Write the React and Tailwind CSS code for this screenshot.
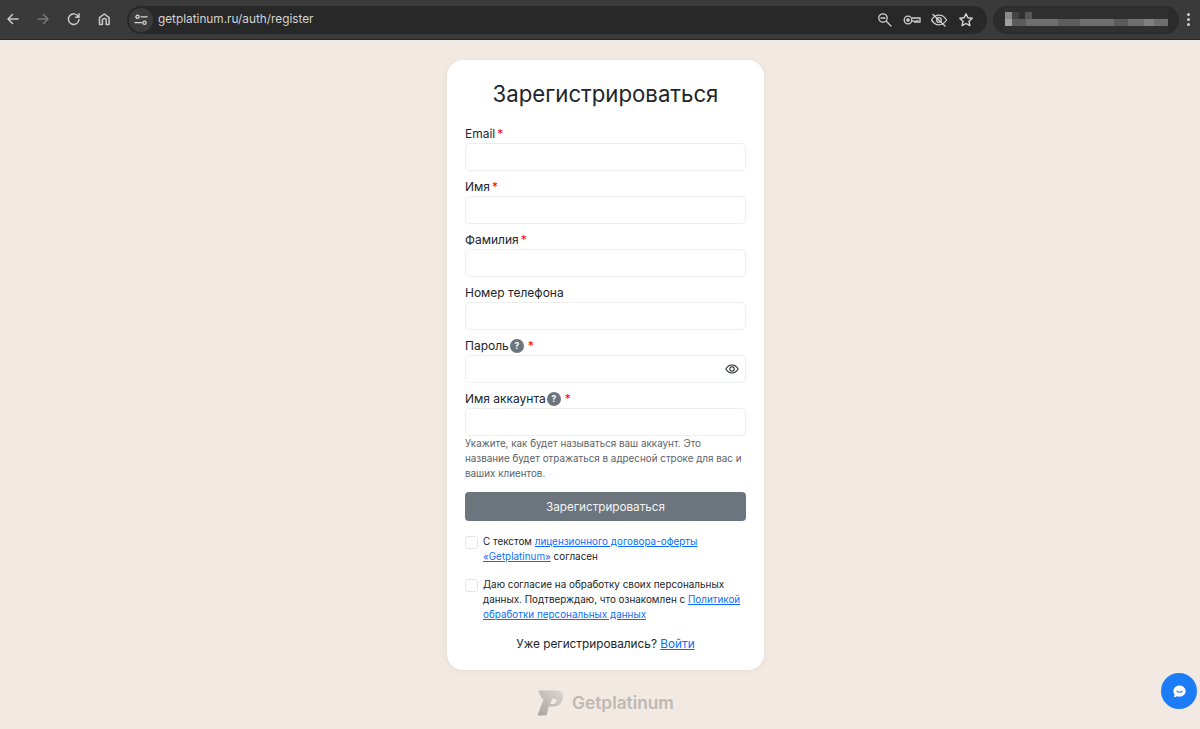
import React from "react";

function Chrome() {
  return (
    <div className="h-[40px] shrink-0 bg-[#3a3a3a] border-b border-[#262626] flex items-center text-[#c9c9c9] font-['Inter',sans-serif]">
      <div className="w-[127px] shrink-0 flex items-center">
        <svg width="127" height="39" viewBox="0 0 127 39" fill="none" stroke="currentColor" strokeWidth="1.5" strokeLinecap="round" strokeLinejoin="round">
          <path d="M18 19H8.500M12.500 14.500 8 19l4.500 4.500" />
          <path d="M38 19h9.500M43.500 14.500 48 19l-4.500 4.500" stroke="#777" />
          <path d="M78.300 16.500a5.300 5.300 0 1 0 .7 3M79 13.800v3.400h-3.400" />
          <path d="M99.500 24.500v-6.800l4.800-3.700 4.800 3.700v6.800h-2.900v-4.200a1.900 1.900 0 0 0-3.800 0v4.200z" />
        </svg>
      </div>
      <div className="w-[860px] h-[28px] rounded-full bg-[#282828] flex items-center relative">
        <div className="ml-[2px] w-[24px] h-[24px] rounded-full bg-[#3c3c3c] flex items-center justify-center">
          <svg width="14" height="12" viewBox="0 0 14 12" fill="none" stroke="#d8d8d8" strokeWidth="1.3" strokeLinecap="round">
            <circle cx="3.500" cy="2.800" r="1.600" />
            <path d="M7 2.800h6M1 8.700h6.500" />
            <circle cx="10.500" cy="8.700" r="1.600" />
          </svg>
        </div>
        <span className="ml-[5px] text-[11.800px] text-[#d4d4d4]">getplatinum.ru/auth/register</span>
        <div className="ml-auto mr-[12px] flex items-center gap-[9px]">
          <svg width="18" height="18" viewBox="0 0 18 18" fill="none" stroke="#cfcfcf" strokeWidth="1.300" strokeLinecap="round">
            <circle cx="7" cy="7" r="4.200" />
            <path d="M5 7h4M10.300 10.300 15 15" />
          </svg>
          <svg width="18" height="18" viewBox="0 0 18 18" fill="none" stroke="#cfcfcf" strokeWidth="1.300">
            <circle cx="5" cy="9" r="3.800" />
            <circle cx="5" cy="9" r="1.200" fill="#cfcfcf" />
            <path d="M8.800 7h8.200v4.200h-2V9.800h-1.500v1.400h-1.800v-1H8.800" />
          </svg>
          <svg width="18" height="18" viewBox="0 0 18 18" fill="none" stroke="#cfcfcf" strokeWidth="1.300" strokeLinecap="round">
            <path d="M1.500 9s2.800-4.800 7.500-4.800S16.500 9 16.500 9s-2.800 4.800-7.500 4.800S1.500 9 1.500 9z" />
            <circle cx="9" cy="9" r="2.300" />
            <path d="M3 3.500 15 15" />
          </svg>
          <svg width="18" height="18" viewBox="0 0 18 18" fill="none" stroke="#d8d8d8" strokeWidth="1.400" strokeLinejoin="round">
            <path d="m9 2.800 1.900 4 4.300.5-3.200 3 .9 4.300L9 12.500l-3.900 2.100.9-4.300-3.200-3 4.300-.5z" />
          </svg>
        </div>
      </div>
      <div className="ml-[6px] w-[186px] h-[28px] rounded-full bg-[#2c2c2c] flex items-center justify-center">
        <svg width="176" height="28" viewBox="0 0 176 28">
          <rect x="6" y="2" width="164" height="24" fill="#303030" />
          <rect x="7" y="6" width="7" height="7" fill="#8a8a8a" />
          <rect x="14" y="6" width="7" height="7" fill="#444" />
          <rect x="27" y="6" width="7" height="7" fill="#555" />
          <rect x="7" y="13" width="7" height="7" fill="#a0a0a0" />
          <rect x="14" y="13" width="14" height="7" fill="#5c5c5c" />
          <rect x="28" y="13" width="142" height="7" fill="#6f6f6f" />
          <rect x="60" y="13" width="22" height="7" fill="#5d5d5d" />
          <rect x="116" y="13" width="14" height="7" fill="#5a5a5a" />
          <rect x="146" y="13" width="10" height="7" fill="#808080" />
        </svg>
      </div>
      <div className="ml-[8px] flex flex-col gap-[2px]">
        <span className="w-[3px] h-[3px] rounded-full bg-[#cfcfcf]" />
        <span className="w-[3px] h-[3px] rounded-full bg-[#cfcfcf]" />
        <span className="w-[3px] h-[3px] rounded-full bg-[#cfcfcf]" />
      </div>
    </div>
  );
}

function Help() {
  return (
    <span className="ml-[-1px] w-[14px] h-[14px] rounded-full bg-[#6c757d] text-white text-[8.500px] font-bold flex items-center justify-center">?</span>
  );
}

function Field({ label, required, help, eye }) {
  return (
    <div className="mb-[5px]">
      <div className="h-[20px] pt-[2px] flex items-center gap-[2px] text-[12px] leading-[18px] text-[#212529]">
        <span>{label}</span>
        {help && <Help />}
        {required && <span className={`text-[#ff0000] text-[12px] leading-[18px] ${help ? "ml-[2px]" : "ml-0"}`}>*</span>}
      </div>
      <div className="h-[28px] rounded-[5px] border border-[#edeef0] bg-white flex items-center justify-end pr-[6px]">
        {eye && (
          <svg width="14" height="14" viewBox="0 0 16 16" fill="none" stroke="#212529" strokeWidth="1.200">
            <path d="M1 8s2.600-4.500 7-4.500S15 8 15 8s-2.600 4.500-7 4.500S1 8 1 8z" />
            <circle cx="8" cy="8" r="2.500" />
          </svg>
        )}
      </div>
    </div>
  );
}

function Check({ children }) {
  return (
    <div className="flex items-start gap-[5px]">
      <span className="mt-[7px] w-[13px] h-[13px] shrink-0 rounded-[3px] border border-[#e4e6e8] bg-white" />
      <p className="text-[9.900px] leading-[15px] text-[#212529] pt-[5px]">{children}</p>
    </div>
  );
}

export default function App() {
  return (
    <div className="w-[1200px] h-[729px] overflow-hidden bg-[#f2e9e3] flex flex-col relative font-['Inter',sans-serif]">
      <Chrome />
      <div className="flex flex-col items-center pt-[20px] pl-[11px]">
        <div className="w-[317px] h-[610px] rounded-[16px] bg-white shadow-[0_1px_6px_rgba(0,0,0,0.06)] px-[18px] pt-[19px]">
          <h1 className="text-[22.200px] leading-[29px] text-center text-[#212529] font-normal mb-[15px]">Зарегистрироваться</h1>
          <Field label="Email" required />
          <Field label="Имя" required />
          <Field label="Фамилия" required />
          <Field label="Номер телефона" />
          <Field label="Пароль" required help eye />
          <Field label="Имя аккаунта" required help />
          <p className="text-[9.850px] leading-[15px] text-[#5c6268] mt-[-5px]">
            Укажите, как будет называться ваш аккаунт. Это название будет отражаться в адресной строке для вас и ваших клиентов.
          </p>
          <button className="mt-[11px] w-full h-[29px] pt-[2px] rounded-[4px] bg-[#6c757d] text-[#f4f4f4] text-[11.700px]">Зарегистрироваться</button>
          <div className="mt-[8px]">
            <Check>С текстом <a className="text-[#0d6efd] underline">лицензионного договора-оферты</a> <a className="text-[#0d6efd] underline">«Getplatinum»</a> согласен</Check>
          </div>
          <div className="mt-[8px]">
            <Check>Даю согласие на обработку своих персональных данных. Подтверждаю, что ознакомлен с <a className="text-[#0d6efd] underline">Политикой</a> <a className="text-[#0d6efd] underline">обработки персональных данных</a></Check>
          </div>
          <p className="mt-[12px] text-center text-[11.800px] leading-[20px] text-[#212529]">
            Уже регистрировались? <a className="text-[#0d6efd] underline">Войти</a>
          </p>
        </div>
        <div className="mt-[20px] flex items-center gap-[8px]">
          <svg width="27" height="26" viewBox="0 0 27 26">
            <defs>
              <linearGradient id="g" x1="0" y1="1" x2="1" y2="0">
                <stop offset="0" stopColor="#a9a5a0" />
                <stop offset="1" stopColor="#dcd7d2" />
              </linearGradient>
            </defs>
            <path d="M1 0.500h19c4.500 0 6.800 3 6 7.500-.8 5-4.500 8.500-9.500 8.500h-4.700L9.500 25.500H0.500L7 8h8.500l-2.200 6h2.700c2 0 3.200-1.200 3.500-3 .2-1.300-.6-2.200-2-2.200H5z" fill="url(#g)" />
          </svg>
          <span className="text-[17.300px] font-semibold text-[#bdb8b3]">Getplatinum</span>
        </div>
      </div>
      <div className="absolute left-[1161px] top-[673px] w-[36px] h-[36px] rounded-full bg-[#1b7cf5] flex items-center justify-center">
        <svg width="15" height="15" viewBox="0 0 16 16">
          <path d="M8 1.500c3.600 0 6.500 2.600 6.500 6s-2.900 6-6.500 6c-1 0-1.900-.2-2.700-.5L2 14.500l.8-3A5.700 5.700 0 0 1 1.500 7.500c0-3.400 2.900-6 6.500-6z" fill="#fff" />
          <path d="M5.300 7.800c.6 1.400 4.800 1.400 5.400 0" fill="none" stroke="#1b7cf5" strokeWidth="1.200" strokeLinecap="round" />
        </svg>
      </div>
    </div>
  );
}
